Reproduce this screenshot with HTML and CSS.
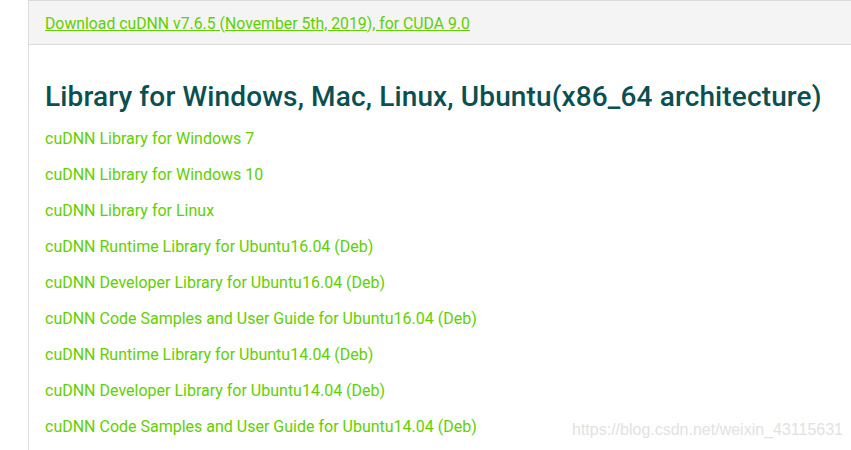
FILE: index.html
```html
<!DOCTYPE html>
<html>
<head>
<meta charset="utf-8">
<link rel="stylesheet" href="styles.css">
</head>
<body>
<div class="page">
  <div class="download-bar">
    <a class="download-link" href="#">Download cuDNN v7.6.5 (November 5th, 2019), for CUDA 9.0</a>
  </div>
  <div class="content">
    <h2 class="title">Library for Windows, Mac, Linux, Ubuntu(x86_64 architecture)</h2>
    <ul class="links">
      <li><a href="#">cuDNN Library for Windows 7</a></li>
      <li><a href="#">cuDNN Library for Windows 10</a></li>
      <li><a href="#">cuDNN Library for Linux</a></li>
      <li><a href="#">cuDNN Runtime Library for Ubuntu16.04 (Deb)</a></li>
      <li><a href="#">cuDNN Developer Library for Ubuntu16.04 (Deb)</a></li>
      <li><a href="#">cuDNN Code Samples and User Guide for Ubuntu16.04 (Deb)</a></li>
      <li><a href="#">cuDNN Runtime Library for Ubuntu14.04 (Deb)</a></li>
      <li><a href="#">cuDNN Developer Library for Ubuntu14.04 (Deb)</a></li>
      <li><a href="#">cuDNN Code Samples and User Guide for Ubuntu14.04 (Deb)</a></li>
    </ul>
  </div>
</div>
<div class="watermark">https://blog.csdn.net/weixin_43115631</div>
</body>
</html>
```

FILE: styles.css
```css
html, body {
  margin: 0;
  padding: 0;
  background: #ffffff;
  width: 851px;
  height: 450px;
  overflow: hidden;
}
body {
  font-family: Roboto, "Liberation Sans", sans-serif;
  position: relative;
}
.page {
  margin-left: 28px;
  border-left: 1px solid #dddddd;
  height: 450px;
}
.download-bar {
  background: #f4f4f4;
  border-top: 1px solid #dcdcdc;
  border-bottom: 1px solid #dcdcdc;
  height: 43px;
  padding-left: 16px;
  display: flex;
  align-items: center;
}
.download-link {
  color: #62d000;
  font-size: 15.8px;
  text-decoration: underline;
  margin-top: 1px;
}
.content {
  padding-left: 16px;
  padding-top: 35px;
}
.title {
  margin: 0;
  font-size: 28px;
  font-weight: 500;
  color: #0b5050;
  line-height: 34px;
  letter-spacing: 0.13px;
}
.links {
  list-style: none;
  margin: 15px 0 0;
  padding: 0;
}
.links li {
  height: 36px;
  line-height: 20px;
}
.links a {
  color: #62d000;
  font-size: 16px;
  text-decoration: none;
}
.watermark {
  position: absolute;
  left: 572px;
  top: 421px;
  font-family: "Liberation Sans", Arial, sans-serif;
  font-size: 16px;
  color: #e2e2e2;
}
```
